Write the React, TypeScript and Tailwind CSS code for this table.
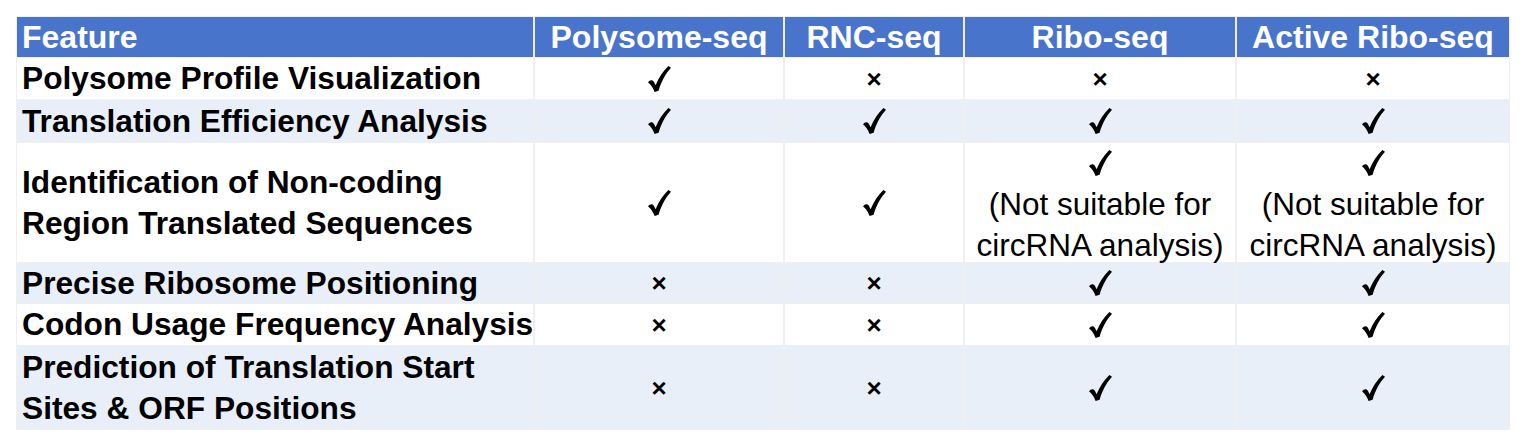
const COLS = ["Polysome-seq", "RNC-seq", "Ribo-seq", "Active Ribo-seq"];

type Mark = "yes" | "no" | "yes-note";

const ROWS: { feature: string[]; marks: Mark[] }[] = [
  { feature: ["Polysome Profile Visualization"], marks: ["yes", "no", "no", "no"] },
  { feature: ["Translation Efficiency Analysis"], marks: ["yes", "yes", "yes", "yes"] },
  { feature: ["Identification of Non-coding", "Region Translated Sequences"], marks: ["yes", "yes", "yes-note", "yes-note"] },
  { feature: ["Precise Ribosome Positioning"], marks: ["no", "no", "yes", "yes"] },
  { feature: ["Codon Usage Frequency Analysis"], marks: ["no", "no", "yes", "yes"] },
  { feature: ["Prediction of Translation Start", "Sites & ORF Positions"], marks: ["no", "no", "yes", "yes"] },
];

// heavy calligraphic tick, as in the source table
const Check = () => (
  <svg width="23" height="26" viewBox="0 0 23 26" className="block">
    <path
      d="M0 16.2 C2 13.6 4.6 13.4 6 16 L7.6 19.2 C10.8 11.8 14.8 5.4 20.4 0 L23 1.8 C17.4 8 13.4 15.2 10.6 24.8 L6.6 26 C5 21.8 3 18.8 0 16.2 Z"
      fill="#000"
    />
  </svg>
);

const Cross = () => (
  <span className="font-['Liberation_Sans',Arial,sans-serif] text-[26px] leading-none font-bold">×</span>
);

const Cell = ({ mark }: { mark: Mark }) => {
  if (mark === "no") return <Cross />;
  if (mark === "yes") return <Check />;
  return (
    <div className="flex flex-col items-center text-[31.5px] leading-[40.5px] font-normal whitespace-nowrap">
      <Check />
      <span className="mt-[8px]">(Not suitable for</span>
      <span>circRNA analysis)</span>
    </div>
  );
};

export default function App() {
  return (
    <div className="w-[1526px] h-[446px] bg-white font-['Liberation_Sans',Arial,sans-serif] text-black">
      <div className="ml-[16px] mt-[16px] w-fit p-px bg-[#efefef]">
        <div className="grid grid-cols-[516px_248px_178px_270px_272px] grid-rows-[40px_41px_42px_119px_40px_41px_83px] gap-x-[2px] gap-y-px">
          <div className="bg-[#4874cb] text-white font-bold text-[32px] leading-none flex items-center pl-[5px]">
            Feature
          </div>
          {COLS.map((c) => (
            <div key={c} className="bg-[#4874cb] text-white font-bold text-[32px] leading-none flex items-center justify-center">
              {c}
            </div>
          ))}
          {ROWS.map((r, i) => {
            const bg = i % 2 === 1 ? "bg-[#e9eff8]" : "bg-white";
            return [
              <div
                key={`f${i}`}
                className={`${bg} flex flex-col justify-center pl-[5px] font-bold text-[31.7px] leading-[41px] whitespace-nowrap overflow-hidden`}
              >
                {r.feature.map((line) => (
                  <span key={line}>{line}</span>
                ))}
              </div>,
              ...r.marks.map((m, j) => (
                <div
                  key={`c${i}-${j}`}
                  className={`${bg} flex justify-center ${m === "yes-note" ? "items-start pt-[7px]" : "items-center"}`}
                >
                  <Cell mark={m} />
                </div>
              )),
            ];
          })}
        </div>
      </div>
    </div>
  );
}
